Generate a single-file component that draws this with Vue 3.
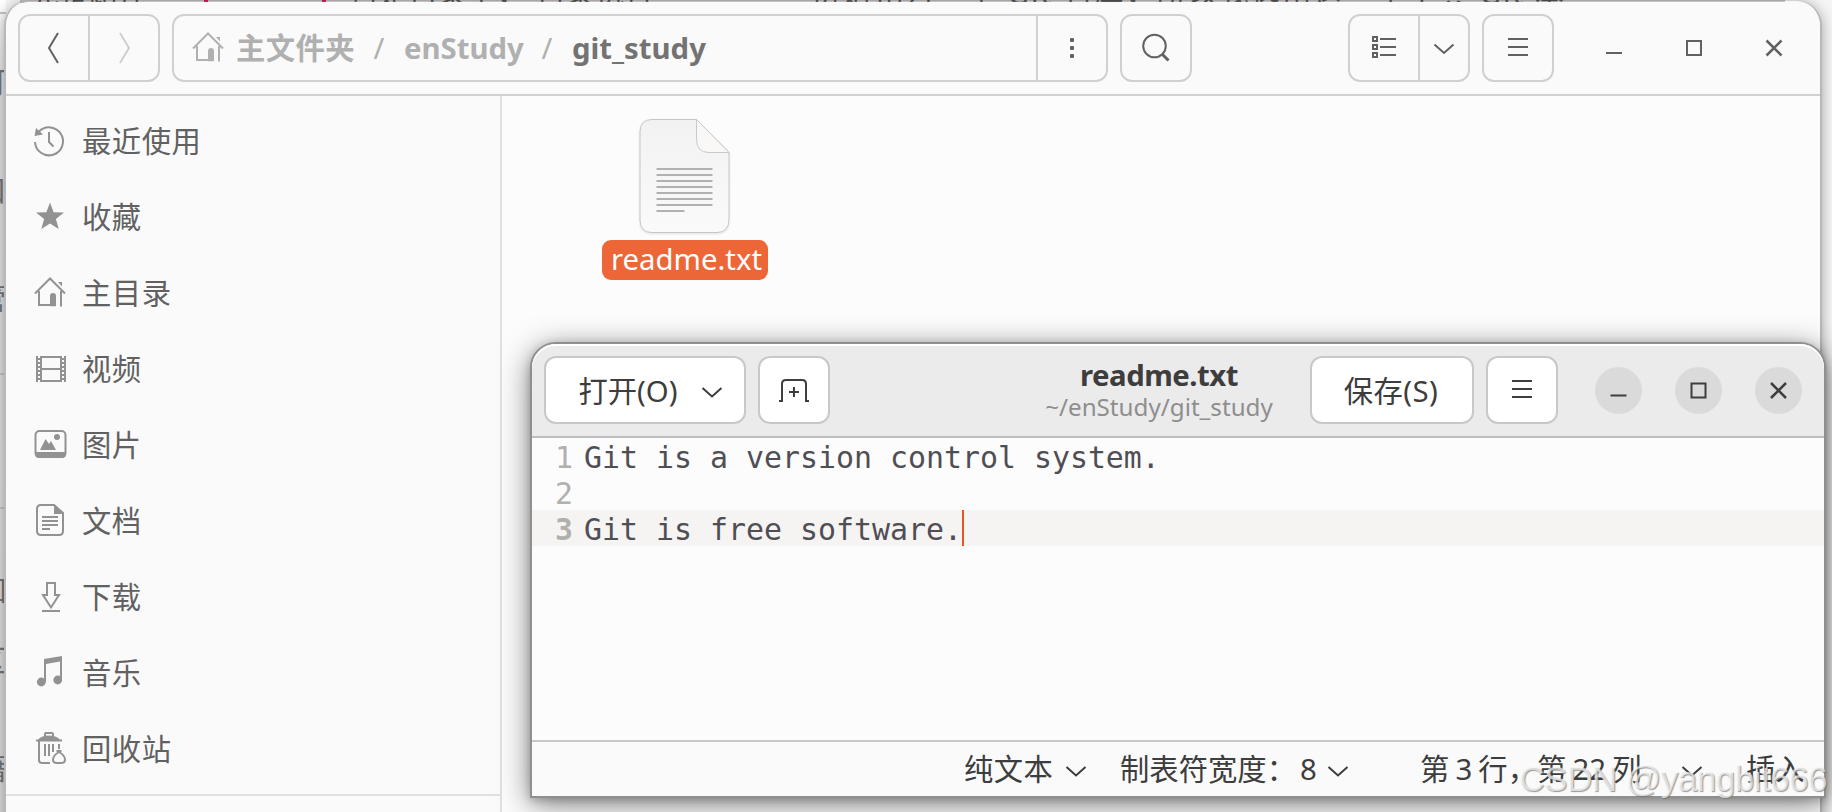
<script setup>
import { ref } from 'vue'

const places = ref([
    {
        name: '最近使用',
        icon: '<path d="M1 17a14 14 0 1 0 4-10.500" fill="none" stroke="currentColor" stroke-width="2"/><path d="M2 3L9 9.500L.5 11z"/><path d="M15 7v10l4.500 4.500" fill="none" stroke="currentColor" stroke-width="2"/>'
    },
    {
        name: '收藏',
        icon: '<path d="M16 1.500L19.600 11.200L30 11.600L21.900 18L24.700 28L16 22.400L7.300 28L10.100 18L2 11.600L12.400 11.200z"/>'
    },
    {
        name: '主目录',
        icon: '<path d="M1 16.500L16 1.500L31 16.500M5 14v14h12M27 14v15.500" fill="none" stroke="currentColor" stroke-width="2"/><path d="M16 29.300V19q0-3 3-3t3 3v10.300zM24 5h4v4.500z"/>'
    },
    {
        name: '视频',
        icon: '<path d="M3 3v26M7 3v26M27 3v26M31 3v26M7 4h20M7 16h20M7 28h20" fill="none" stroke="currentColor" stroke-width="2"/><path d="M5 5v24M29 5v24" stroke="currentColor" stroke-width="2.500" stroke-dasharray="2 2"/>'
    },
    {
        name: '图片',
        icon: '<rect x="1.500" y="2" width="30" height="26" rx="4" fill="none" stroke="currentColor" stroke-width="2"/><path d="M1 23h31v2q0 4-4 4H5q-4 0-4-4zM6 21l5.500-11l3.500 5l2-3l5 9z"/><circle cx="23" cy="8" r="3"/>'
    },
    {
        name: '文档',
        icon: '<path d="M20 0H7Q3 0 3 4v22q0 4 4 4h18q4 0 4-4V8z" fill="none" stroke="currentColor" stroke-width="2"/><path d="M20-1v10h10zM8 11h16v2H8zM8 15h16v2H8zM8 19h16v2H8zM8 23h8v2H8z"/>'
    },
    {
        name: '下载',
        icon: '<path d="M13 2h8v12h4L17 26.500L9 14h4zM8 30h18" fill="none" stroke="currentColor" stroke-width="2"/>'
    },
    {
        name: '音乐',
        icon: '<path d="M10 2L28-1V23h-2V4.500L12 7v18h-2z"/><circle cx="7.300" cy="25" r="4.400"/><circle cx="23.700" cy="23" r="4.400"/>'
    },
    {
        name: '回收站',
        icon: '<path d="M2 6.500h2Q8 2.500 15 2.500t11 4h2v2H2z"/><path d="M11 4V1q0-1 1-1h6q1 0 1 1v3M5 8v19q0 3 3 3h8M11 11v12M15 11v12M19 11v8M25 11v5M22.500 18h5M25 19q-6 3.500-6 7.500 0 3.500 3.500 3.500h5q3.500 0 3.500-3.500 0-4-6-7.500z" fill="none" stroke="currentColor" stroke-width="2"/>'
    }
])

const lines = ref(['Git is a version control system.', '', 'Git is free software.'])
const currentLine = ref(2)
</script>

<template>
    <div class="desktop">
        <!-- page behind the windows -->
        <div class="behind-top">
            <span class="b1">完整路径</span><i class="red1"></i><i class="red2"></i><span class="b2">可是目录下，“目录执行”一</span>
            <span class="b3">初始化为一个 Git 仓库，所以我选用这一个工具 Git 本</span>
        </div>
        <div class="behind-left">
            <span class="c1">可</span><span class="c2">口</span><span class="c3">管</span><span class="c4">如</span><span class="c5">区</span><span class="c6">籍</span>
            <i class="r1"></i><i class="r2"></i><i class="r3"></i>
        </div>

        <div class="window files">
            <div class="files-header">
                <div class="group nav">
                    <div class="cell">
                        <svg width="32" height="32"><path d="M20 2L11 17L20 32" class="line dark" /></svg>
                    </div>
                    <div class="cell">
                        <svg width="32" height="32"><path d="M12 2L21 17L12 32" class="line pale" /></svg>
                    </div>
                </div>
                <div class="group path">
                    <div class="crumbs">
                        <svg class="home" width="32" height="32" v-html="places[2].icon"></svg>
                        <span class="root">主文件夹</span>
                        <span class="slash">/</span>
                        <span class="parent">enStudy</span>
                        <span class="slash">/</span>
                        <span class="current">git_study</span>
                    </div>
                    <div class="cell more">
                        <svg width="32" height="32" class="glyph">
                            <rect x="14" y="6" width="4" height="4" rx="1" />
                            <rect x="14" y="14" width="4" height="4" rx="1" />
                            <rect x="14" y="22" width="4" height="4" rx="1" />
                        </svg>
                    </div>
                </div>
                <div class="group single">
                    <svg width="32" height="32">
                        <circle cx="14.500" cy="14" r="11.300" class="line dark" />
                        <path d="M22 22L28.500 28.500" class="line dark handle" />
                    </svg>
                </div>
                <div class="group view">
                    <div class="cell">
                        <svg width="32" height="32">
                            <path d="M5 5h4v4H5zM5 13h4v4H5zM5 21h4v4H5zM12 7h16M12 15h16M12 23h16" class="line dark" />
                        </svg>
                    </div>
                    <div class="cell">
                        <svg width="32" height="32"><path d="M6.500 12.500L16 21L25.500 12.500" class="line dark" /></svg>
                    </div>
                </div>
                <div class="group single">
                    <svg width="32" height="32"><path d="M6 7h20M6 15h20M6 23h20" class="line dark" /></svg>
                </div>
                <div class="controls">
                    <svg width="40" height="40"><path d="M12 25h16" class="line dark" /></svg>
                    <svg width="40" height="40"><path d="M13 13h14v14H13z" class="line dark" /></svg>
                    <svg width="40" height="40"><path d="M12.500 12.500L27.500 27.500M27.500 12.500L12.500 27.500" class="line dark thick" /></svg>
                </div>
            </div>
            <div class="files-body">
                <div class="sidebar">
                    <div class="place" v-for="place in places" :key="place.name">
                        <svg width="32" height="32" v-html="place.icon"></svg>
                        <span>{{ place.name }}</span>
                    </div>
                    <div class="separator"></div>
                </div>
                <div class="content">
                    <div class="file">
                        <svg width="96" height="120" viewBox="0 0 96 120">
                            <defs>
                                <linearGradient id="paper" x1="0" y1="0" x2="0" y2="1">
                                    <stop offset="0" stop-color="#f2f2f2" />
                                    <stop offset="1" stop-color="#fafafa" />
                                </linearGradient>
                            </defs>
                            <path class="paper" d="M15 3.500H59.500L92 36.500V103Q92 116.500 80 116.500H15Q3 116.500 3 104V16Q3 3.500 15 3.500z" />
                            <path class="fold" d="M59.500 3.500V23Q59.500 36.500 72 36.500H92z" />
                            <path class="rows" d="M19.500 53h56M19.500 59h56M19.500 65h56M19.500 71h56M19.500 77h56M19.500 83h56M19.500 89h56M19.500 95h28" />
                        </svg>
                        <span class="file-name">readme.txt</span>
                    </div>
                </div>
            </div>
        </div>

        <div class="window editor">
            <div class="editor-header">
                <div class="btn open">
                    <span>打开(O)</span>
                    <svg width="20" height="14"><path d="M.5 2L10 10.500L19.500 2" class="line" /></svg>
                </div>
                <div class="btn square">
                    <svg width="32" height="32">
                        <path d="M1 27h3V10q0-4 4-4h16q4 0 4 4v17h3M16 13v10M11 18h10" class="line" />
                    </svg>
                </div>
                <div class="title">
                    <div class="name">readme.txt</div>
                    <div class="dir">~/enStudy/git_study</div>
                </div>
                <div class="btn save">保存(S)</div>
                <div class="btn square">
                    <svg width="32" height="32"><path d="M6 7h20M6 15h20M6 23h20" class="line" /></svg>
                </div>
                <div class="controls round">
                    <svg width="47" height="47"><path d="M15.500 28.500h16" class="line" /></svg>
                    <svg width="47" height="47"><path d="M16.500 16.500h14v14h-14z" class="line" /></svg>
                    <svg width="47" height="47"><path d="M16 16L31 31M31 16L16 31" class="line thick" /></svg>
                </div>
            </div>
            <div class="code">
                <div
                class="code-line"
                v-for="(line, index) in lines"
                :key="index"
                :class="index === currentLine && 'line-active'">
                    <span class="number">{{ index + 1 }}</span>
                    <span class="text">{{ line }}</span>
                    <i v-if="index === currentLine" class="caret"></i>
                </div>
            </div>
            <div class="status">
                <span class="lang">纯文本</span>
                <svg width="20" height="14"><path d="M.5 2L10 10.500L19.500 2" class="line" /></svg>
                <span class="tabs">制表符宽度：<b>8</b></span>
                <svg width="20" height="14"><path d="M.5 2L10 10.500L19.500 2" class="line" /></svg>
                <span class="cursor">第 3 行，第 22 列</span>
                <svg width="20" height="14"><path d="M.5 2L10 10.500L19.500 2" class="line" /></svg>
                <span class="mode">插入</span>
            </div>
        </div>

        <div class="watermark">CSDN @yangbit666</div>
    </div>
</template>

<style>
body {
    margin: 0;
    overflow: hidden;
}
</style>

<style scoped>
.desktop {
    position: relative;
    width: 1832px;
    height: 812px;
    overflow: hidden;
    background-color: #f5f5f5;
    font-family: "Noto Sans", "Noto Sans CJK SC", sans-serif;
    font-size: 29.33px;
    line-height: 40px;
}

.desktop * {
    box-sizing: border-box;
}

svg {
    display: block;
    flex: none;
    overflow: visible;
    fill: currentColor;
}

.line {
    fill: none;
    stroke: currentColor;
    stroke-width: 2;
}

.dark {
    stroke: #616161;
}

.pale {
    stroke: #cfcfcf;
}

.handle {
    stroke-width: 3;
}

.thick {
    stroke-width: 2.500;
}

/* the page left visible round the windows */
.behind-top {
    position: absolute;
    top: 0;
    left: 20px;
    width: 1765px;
    height: 3px;
    overflow: hidden;
    background: #c4c2c2;
    color: #555;
}

.behind-top span {
    position: absolute;
    top: -27px;
    white-space: nowrap;
}

.behind-top .b1 {
    left: 10px;
}

.behind-top .b2 {
    left: 330px;
}

.behind-top .b3 {
    left: 790px;
    letter-spacing: 2px;
}

.behind-top i {
    position: absolute;
    top: 0;
    width: 4px;
    height: 3px;
    background: #c7254e;
}

.red1 {
    left: 184px;
}

.red2 {
    left: 302px;
}

.behind-left {
    position: absolute;
    top: 0;
    left: 0;
    width: 6px;
    height: 812px;
    overflow: hidden;
    background: linear-gradient(#fff, #e4e5e6 80px, #dedede);
    color: #777;
}

.behind-left span {
    position: absolute;
    left: -23px;
}

.behind-left i {
    position: absolute;
    left: 0;
    width: 6px;
    height: 2px;
    background-color: #c4c4c4;
}

.r1 {
    top: 12px;
}

.r2 {
    top: 373px;
}

.r3 {
    top: 507px;
}

.c1 {
    top: 62px;
}

.c2 {
    top: 170px;
}

.c3 {
    top: 278px;
}

.c4 {
    top: 570px;
}

.c5 {
    top: 640px;
}

.c6 {
    top: 748px;
}

.window {
    position: absolute;
    display: flex;
    flex-direction: column;
}

.files {
    left: 4px;
    top: 0;
    width: 1818px;
    height: 840px;
    padding-top: 2px;
    border: solid #b8b8b8;
    border-width: 0 2px;
    border-radius: 26px 26px 0 0;
    background-color: #fafafa;
    background-clip: content-box;
    box-shadow: 0 2px 14px rgba(0, 0, 0, .35);
    color: #616161;
}

.files-header {
    display: flex;
    align-items: center;
    gap: 12px;
    height: 94px;
    padding: 0 26px 0 12px;
    border-bottom: 2px solid #d0d0d0;
    border-radius: 24px 24px 0 0;
    background-color: #fafafa;
}

.group {
    display: flex;
    height: 68px;
    border: 2px solid #d0d0d0;
    border-radius: 12px;
}

.cell {
    display: flex;
    flex: 1;
    align-items: center;
    justify-content: center;
}

.cell + .cell,
.more {
    border-left: 2px solid #d0d0d0;
}

.nav {
    width: 142px;
}

.nav svg {
    margin-top: -2px;
}

.path {
    width: 936px;
}

.crumbs {
    display: flex;
    flex: 1;
    align-items: center;
    padding: 0 0 0 18px;
    font-weight: bold;
    color: #b0b0b0;
    white-space: nowrap;
}

.home {
    margin-right: 12px;
}

.slash {
    width: 50px;
    text-align: center;
    font-weight: normal;
}

.root {
    width: 118px;
    letter-spacing: .4px;
}

.parent {
    width: 118px;
}

.path .more {
    flex: 0 0 70px;
}

.current {
    color: #737373;
}

.single {
    width: 72px;
    align-items: center;
    justify-content: center;
}

.view {
    width: 122px;
    margin-left: auto;
}

.view .cell:last-child {
    flex: 0 0 50px;
}

.controls {
    display: flex;
    gap: 40px;
    margin-left: 28px;
}

.files-body {
    display: flex;
    flex: 1;
}

.sidebar {
    width: 496px;
    padding-top: 7px;
    border-right: 2px solid #e0e0e0;
    background-color: #fafafa;
}

.place {
    display: flex;
    align-items: center;
    gap: 16px;
    height: 76px;
    padding-left: 28px;
    letter-spacing: .5px;
}

.place svg {
    color: #929292;
}

.separator {
    height: 2px;
    margin-top: 7px;
    background-color: #e0e0e0;
}

.content {
    flex: 1;
    background-color: #fcfcfc;
}

.file {
    display: flex;
    flex-direction: column;
    align-items: center;
    width: 166px;
    margin: 20px 0 0 100px;
}

.file svg {
    margin-left: -1px;
    filter: drop-shadow(0 1px 1px rgba(0, 0, 0, .1));
}

.paper {
    fill: url(#paper);
    stroke: #c6c6c6;
}

.fold {
    fill: #f9f8f7;
    stroke: #c9c9c9;
}

.rows {
    stroke: #b1b1b1;
    stroke-width: 2;
}

.file-name {
    width: 166px;
    height: 40px;
    margin-top: 4px;
    padding-left: 3px;
    border-radius: 9px;
    background-color: #ed6637;
    color: #fff;
    line-height: 38px;
    text-align: center;
}

.editor {
    left: 530px;
    top: 342px;
    width: 1296px;
    height: 456px;
    border: 2px solid #8f8f8f;
    border-radius: 26px 26px 0 0;
    background-color: #fcfcfc;
    box-shadow: 0 6px 30px rgba(0, 0, 0, .5), 0 2px 8px rgba(0, 0, 0, .2);
    color: #3d3d3d;
}

.editor-header {
    display: flex;
    align-items: center;
    height: 94px;
    padding: 0 22px 0 12px;
    border-bottom: 2px solid #bdbdbd;
    border-radius: 24px 24px 0 0;
    background-color: #ebebeb;
    box-shadow: inset 0 2px #fff;
}

.btn {
    display: flex;
    align-items: center;
    justify-content: center;
    height: 68px;
    margin-right: 12px;
    border: 2px solid #c8c8c8;
    border-radius: 12px;
    background-color: #fff;
}

.open {
    width: 202px;
    gap: 24px;
    padding: 2px 0 0 10px;
}

.open svg {
    margin-top: 4px;
}

.square {
    width: 72px;
}

.title {
    flex: 1;
    margin-left: 166px;
    text-align: center;
}

.name {
    height: 33px;
    font-weight: bold;
    letter-spacing: -.5px;
    line-height: 34px;
}

.dir {
    height: 32px;
    font-size: 24.200px;
    line-height: 32px;
    color: #8e8e8e;
}

.save {
    width: 164px;
    padding: 2px 2px 0 0;
    letter-spacing: .4px;
}

.round {
    gap: 33px;
    margin-left: 25px;
}

.round svg {
    border-radius: 50%;
    background-color: #dadada;
}

.code {
    flex: 1;
    font-family: "DejaVu Sans Mono", monospace;
    font-size: 29.9px;
    line-height: 39px;
    color: #504e55;
}

.code-line {
    display: flex;
    height: 36px;
    white-space: pre;
}

.line-active {
    background-color: #f5f4f3;
}

.number {
    width: 41px;
    margin-right: 11px;
    text-align: right;
    color: #b0b0ac;
}

.line-active .number {
    font-weight: bold;
}

.caret {
    width: 2px;
    background-color: #e95420;
}

.status {
    display: flex;
    align-items: center;
    height: 56px;
    border-top: 2px solid #c8c8c8;
    background-color: #fafafa;
    white-space: nowrap;
}

.status svg {
    margin-top: 6px;
}

.lang {
    width: 102px;
    margin-left: 432px;
    letter-spacing: .4px;
}

.tabs {
    width: 208px;
    margin-left: 34px;
}

.tabs b {
    font-weight: normal;
    margin-left: 4px;
}

.cursor {
    width: 262px;
    margin-left: 72px;
    word-spacing: -1.500px;
}

.mode {
    margin-left: 44px;
}

.watermark {
    position: absolute;
    right: 5px;
    top: 757px;
    font-family: "Liberation Sans", sans-serif;
    font-size: 35px;
    letter-spacing: -.5px;
    line-height: 44px;
    color: rgba(250, 250, 250, .7);
    text-shadow: 1px 1px 1px rgba(110, 110, 110, .7);
    white-space: nowrap;
}
</style>
